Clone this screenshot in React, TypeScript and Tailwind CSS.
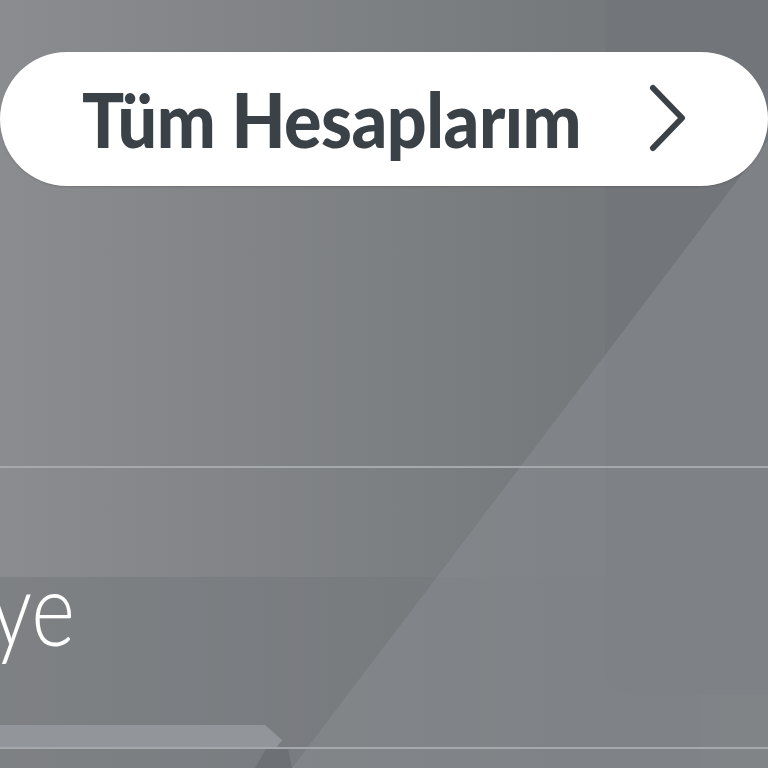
import React from "react";

const Backdrop: React.FC = () => (
  <svg
    className="absolute inset-0 h-full w-full"
    viewBox="0 0 768 768"
    preserveAspectRatio="none"
  >
    <defs>
      <linearGradient id="bg" x1="0" y1="0" x2="1" y2="0">
        <stop offset="0" stopColor="#8a8c8f" />
        <stop offset="0.75" stopColor="#76797c" />
        <stop offset="1" stopColor="#777a7d" />
      </linearGradient>
    </defs>
    <rect x="0" y="0" width="768" height="768" fill="url(#bg)" />
    {/* right panel */}
    <rect x="605" y="-40" width="200" height="735" rx="22" fill="#72767a" />
    {/* darker card under the text */}
    <rect x="-20" y="577" width="720" height="200" rx="14" fill="#74787b" opacity="0.55" />
    {/* light diagonal wedge */}
    <polygon points="292,768 768,140 768,768" fill="#8a8e91" opacity="0.5" />
    {/* tab */}
    <path d="M0 725 H265 L282 740 L276 748 H0 Z" fill="#92959a" />
    <polygon points="266,749 288,749 292,768 255,768" fill="#6d7074" />
  </svg>
);

export default function App() {
  return (
    <div className="relative h-[768px] w-[768px] overflow-hidden bg-[#808386] font-['Lato',sans-serif]">
      <Backdrop />
      <div className="relative flex flex-col">
        <div className="mt-[52px] flex h-[134px] items-center rounded-full bg-white pl-[82px] pr-[80px] shadow-[0_1px_2px_rgba(0,0,0,0.15)]">
          <span className="flex-1 origin-center scale-y-[1.08] text-[70px] font-black leading-none tracking-[-0.5px] text-[#3a4248]">
            Tüm Hesaplarım
          </span>
          <svg width="40" height="70" viewBox="0 0 40 70" className="shrink-0">
            <path
              d="M5 4 L34 34 L5 64"
              fill="none"
              stroke="#3a4248"
              strokeWidth="6"
              strokeLinecap="round"
              strokeLinejoin="round"
            />
          </svg>
        </div>

        <div className="mt-[280px] h-[2px] bg-[#a6a9ab]" />

        <div className="mt-[108px] flex h-[148px] items-start">
          <span className="-ml-[10px] -mt-[20px] origin-top-left scale-y-[1.22] text-[84px] font-light leading-none text-white">
            ye
          </span>
        </div>

        <div className="mt-[23px] h-[2px] bg-[#a6a9ab]" />
      </div>
    </div>
  );
}
